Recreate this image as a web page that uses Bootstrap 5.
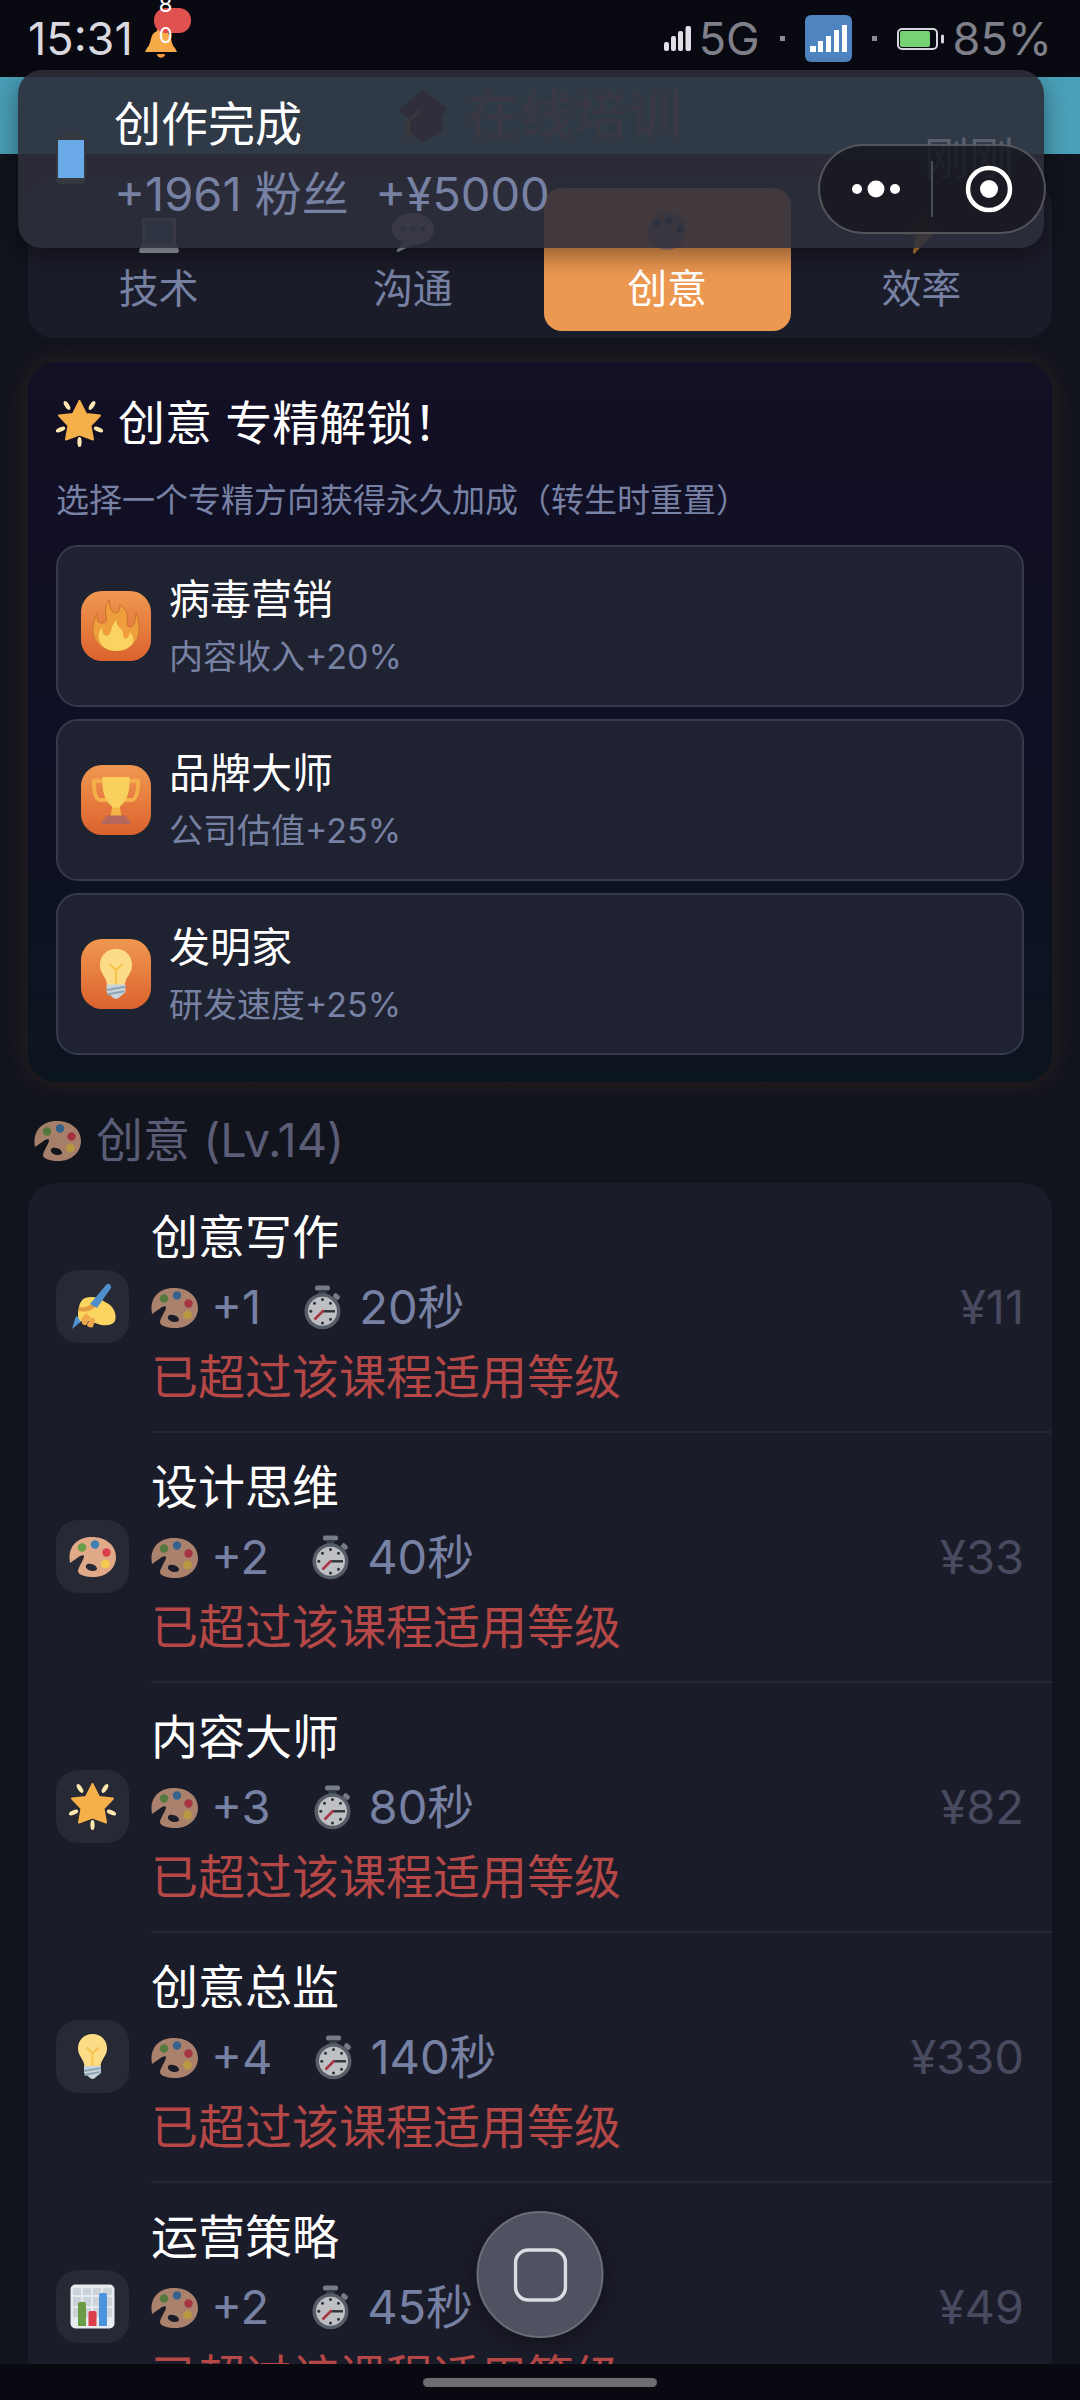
<!DOCTYPE html>
<html lang="zh-CN">
<head>
<meta charset="utf-8">
<meta name="viewport" content="width=device-width, initial-scale=1">
<title>在线培训</title>
<link href="https://cdn.jsdelivr.net/npm/bootstrap@5.3.0/dist/css/bootstrap.min.css" rel="stylesheet">
<style>
  :root { --panel: #1b1c29; --muted: #7781a3; --faint: #484a60; --icon: 47px; }
  body { background: #11131d; color: #fff; font-family: Inter, "Noto Sans CJK SC", sans-serif; font-size: 47px; line-height: 70px; }
  svg { display: block; flex: none; }
  button { font: inherit; color: inherit; }
  .ico { width: var(--icon); height: var(--icon); }
  .dim { opacity: .72; }
  .txt-muted { color: var(--muted); }

  .status-bar { height: 77px; background: #080911; padding: 0 28px; font-size: 45px; color: #7f808a; z-index: 1; }
  .clock { color: #d9d9e0; }
  .bell-wrap { margin: 8px 0 0 9px; }
  .bell-count { left: 12px; top: -19px; width: 37px; height: 25px; border-radius: 12px; background: #e0524f; padding-left: 5px; color: #fff; font-size: 22px; line-height: 31px; }
  .bell-count span { width: 14px; word-break: break-all; }
  .sep-dot { width: 5px; height: 5px; margin: 0 20px; background: #8a8b94; }

  .page-head { height: 77px; background: linear-gradient(90deg, #489db5, #4aa0b8); font-size: 54px; color: #b09a92; gap: 18px; }

  .notice { top: 70px; left: 18px; right: 36px; padding: 19px 30px 19px 29px; border-radius: 24px; background: rgba(46, 47, 59, .9); box-shadow: 0 8px 24px rgba(0, 0, 0, .4); z-index: 2; }
  .notice-text { margin-left: 18px; }
  .notice-time { color: #5a606e; font-size: 45px; }
  .capsule { top: 144px; right: 34px; width: 228px; height: 90px; border-radius: 45px; border: 2px solid rgba(255, 255, 255, .25); background: rgba(22, 24, 30, .85); z-index: 3; }
  .capsule button { flex: 1; height: 100%; background: none; border: 0; padding: 0; }
  .capsule-line { width: 2px; height: 56px; background: #4a4c54; }

  main { padding: 27px 28px 0; }
  .tabs-panel { background: var(--panel); border-radius: 26px; padding: 7px; gap: 7px; }
  .tab-btn { flex: 1; background: none; border: 0; border-radius: 18px; padding: 21px 0 12px; gap: 4px; font-size: 40px; line-height: 60px; color: var(--muted); }
  .tab-btn.active { background: #ed9850; color: #fff; }
  .tab-btn .ico { --icon: 46px; }

  .spec-panel { margin-top: 24px; padding: 28px 28px 27px; border-radius: 28px; background: linear-gradient(180deg, #130f25, #0e1024 60%, #0b151f); box-shadow: 0 0 26px 4px rgba(240, 150, 70, .09); }
  .spec-title { font-size: 47px; line-height: 66px; font-weight: 400; gap: 15px; margin: 0 0 19px; }
  .spec-sub { font-size: 33px; line-height: 50px; margin: 0 0 20px; }
  .spec-list { gap: 12px; }
  .spec-opt { height: 162px; border: 2px solid #373a4e; border-radius: 22px; background: #1f2230; padding: 0 23px; gap: 18px; }
  .opt-name { font-size: 41px; line-height: 62px; }
  .opt-desc { font-size: 34px; line-height: 54px; }
  .opt-ico { width: 70px; height: 70px; border-radius: 21px; background: linear-gradient(180deg, #ef9851, #dc622d); }
  .opt-ico .ico { --icon: 52px; }

  .section-head { margin: 23px 0 8px; padding-left: 6px; gap: 15px; font-size: 47px; line-height: 70px; font-weight: 400; color: #5b5d76; }
  .course-panel { background: var(--panel); border-radius: 28px 28px 0 0; }
  .course { padding-left: 28px; gap: 22px; }
  .course-ico { width: 73px; height: 73px; margin-bottom: 3px; border-radius: 22px; background: #272935; }
  .course-main { padding: 19px 28px 19px 0; border-bottom: 2px solid #252733; }
  .meta-row { gap: 38px; color: var(--muted); }
  .meta-item { gap: 13px; }
  .warn-text { color: #b54746; }
  .price { color: var(--faint); }

  .float-btn { bottom: 62px; width: 127px; height: 127px; border-radius: 50%; background: #4f5260; border: 2px solid #6a6c78; box-shadow: 0 4px 24px rgba(0, 0, 0, .4); z-index: 2; }
  .nav-strip { height: 36px; background: #080911; z-index: 1; }
  .nav-pill { width: 234px; height: 9px; border-radius: 5px; background: #6e6e72; }
</style>
<script src="https://cdn.jsdelivr.net/npm/bootstrap@5.3.0/dist/js/bootstrap.bundle.min.js"></script>
</head>
<body>
<svg width="0" height="0" class="position-absolute" aria-hidden="true">
  <defs>
    <symbol id="i-palette" viewBox="0 0 47 47">
      <path fill="#e0a988" fill-rule="evenodd" d="M1 30C-2 13 9 4 23 4c14 0 24 8.500 24 20S37 44 25 44c-8 0-16-2-16-6 0-3 6-12 6-14.500 0-2-2-1.500-4-.5zM17 32.500c-1 3 3 5.500 7 5.500s5-2 3-4.500-9-4-10-1z"/>
      <circle cx="13" cy="14.500" r="4.200" fill="#6a9e45"/><circle cx="26" cy="11.500" r="4.200" fill="#3f7fb5"/><circle cx="37.500" cy="19.500" r="4.200" fill="#dc3f4c"/><circle cx="36.500" cy="31" r="4.400" fill="#f5c94c"/>
    </symbol>
    <symbol id="i-timer" viewBox="0 0 47 47">
      <rect x="16" y="1.500" width="15" height="5" rx="2" fill="#98a2aa"/><rect x="19.500" y="6" width="8" height="5" fill="#414b52"/>
      <rect x="34" y="10" width="7" height="5" rx="2" transform="rotate(42 37.500 12.500)" fill="#98a2aa"/>
      <circle cx="23.500" cy="27.300" r="18" fill="#6d7880"/><circle cx="23.500" cy="27.300" r="14.500" fill="#fff"/>
      <g fill="#333b42"><circle cx="23.500" cy="15.500" r="1.500"/><circle cx="23.500" cy="39" r="1.500"/><circle cx="11.800" cy="27.300" r="1.500"/><circle cx="15.500" cy="19.300" r="1.500"/><circle cx="31.500" cy="19.300" r="1.500"/><circle cx="31.500" cy="35.300" r="1.500"/></g>
      <path d="M23.500 27.300H36" stroke="#333b42" stroke-width="2.400"/><path d="M24.500 26.300 15.500 35.500" stroke="#dc3f4c" stroke-width="2.600"/>
    </symbol>
    <symbol id="i-star" viewBox="0 0 47 47">
      <path fill="#f5b04a" stroke="#f5b04a" stroke-width="2" stroke-linejoin="round" d="m23.500 1 6.500 13 14 1.500-9.500 10L37 39.500l-13.500-5-13.500 5 2.500-14L3 15.500 17 14z"/>
      <g fill="#ffe7b0"><ellipse cx="11" cy="5.500" rx="2.200" ry="5" transform="rotate(-33 11 5.500)"/><ellipse cx="36" cy="5.500" rx="2.200" ry="5" transform="rotate(33 36 5.500)"/><ellipse cx="4.500" cy="29.500" rx="2.200" ry="5" transform="rotate(68 4.500 29.500)"/><ellipse cx="42.500" cy="29.500" rx="2.200" ry="5" transform="rotate(-68 42.500 29.500)"/><ellipse cx="23.500" cy="42" rx="2.100" ry="5"/></g>
    </symbol>
    <symbol id="i-bulb" viewBox="0 0 47 47">
      <path fill="#fddc87" d="M23.500 1C14.500 1 9 7.500 9 15.500c0 8 6 10 6.500 18h16C32 25.500 38 23.500 38 15.500 38 7.500 32.500 1 23.500 1z"/>
      <path fill="none" stroke="#f6c44e" stroke-width="2" d="M23.500 33V20l-6-5.500M23.500 20l6-5.500"/>
      <path fill="#c8d3dc" d="M15 33h17v7l-5 4c-2 2.500-5 2.500-7 0l-5-4z"/><path stroke="#8fa3b3" stroke-width="1.800" d="m15 38 17-3M15.500 42 31 39"/>
    </symbol>
    <symbol id="i-pen" viewBox="0 0 47 47">
      <path fill="#4d93d0" d="m3 46 4-13 7 4z"/>
      <path fill="#fcd560" d="M9 34C9 26 10 18 16 15c7-2 14-1 20 4 9 4 12 12 10 19-3 5-12 5-17 3l-9-3-9 0z"/>
      <path fill="#efa94b" d="m12 36 5-6 4 4-3 7c-1 2-5 1-5-1zM18 42l4-8 4 2-2 8c-2 1-6 0-6-2z"/>
      <path fill="#d98b36" d="M10 24c6 1 11-1 15-5l3 3c-5 6-12 8-18 6z" opacity=".75"/>
      <path fill="#4d8ecb" d="m21 21 16-19c2-3 6 0 5 3L28 25z"/>
    </symbol>
    <symbol id="i-chart" viewBox="0 0 47 47">
      <rect x="1.500" y="1.500" width="44" height="44" rx="5" fill="#e6ebef"/><path fill="#ccd4da" d="M4 5h8v7H4zm10 0h8v7h-8zm10 0h8v7h-8zm10 0h9v7h-9zM4 14h8v9H4zm10 0h8v9h-8zm10 0h8v9h-8zm10 0h9v9h-9zM4 25h8v9H4zm10 0h8v9h-8zm10 0h8v9h-8zm10 0h9v9h-9z"/>
      <path fill="#6a9c45" d="M9 43V21q0-2 2-2h4q2 0 2 2v22z"/><path fill="#dc3d4c" d="M19.500 43V30q0-2 2-2h4q2 0 2 2v13z"/><path fill="#4c93dd" d="M30 43V12q0-2 2-2h4q2 0 2 2v31z"/>
    </symbol>
    <symbol id="i-fire" viewBox="0 0 52 54">
      <path fill="#ee9e3d" stroke="#c9712c" d="M26 53C11 53 2 43 2 30c0-6 2-11 4-16 1 4-1 10 6 10s3-8 3-12c0-5 1-9 4-12 0 6 2 12 5 13 5 2 6-4 6-8 6 4 8 9 8 14 0 4-2 8 2 9 6 1 6-9 7-15 2 6 3 11 3 17 0 13-9 23-24 23z"/>
      <path fill="#fbd363" d="M26 53C15 53 8 46 8 37c0-4 2-7 4-9-1 5 1 9 4 9 7 0 3-11 11-16-1 5 2 7 5 10 3 4 0 8 4 9 3 0 4-3 4-7 2 2 4 5 4 8 0 7-8 12-18 12z"/>
    </symbol>
    <symbol id="i-trophy" viewBox="0 0 54 54">
      <path fill="none" stroke="#f6b04b" stroke-width="4" stroke-linejoin="round" d="M16 7H4c0 8 1 18 6 20h9M38 7h12c0 8-1 18-6 20h-9"/>
      <path fill="#f9d05d" d="M13 3h28c1 13-2 24-9 30-2 2-2 6 0 11H22c2-5 2-9 0-11C15 27 12 16 13 3z"/><path fill="#f4b546" d="M23 35h8l2 10H21z"/>
      <path fill="#b5665d" d="M17 43h20l5 7v2H12v-2z"/>
    </symbol>
    <symbol id="i-cap" viewBox="0 0 50 52"><path fill="#402838" d="M25 0 50 19 44 25v17L25 52 12 42V30L0 20z"/><path fill="none" stroke="#9c8a58" stroke-width="4" d="M22 21 10 31v18"/></symbol>
  </defs>
</svg>

<div class="vh-100 d-flex flex-column overflow-hidden position-relative">
  <div class="status-bar d-flex justify-content-between align-items-center flex-shrink-0">
    <div class="d-flex align-items-center">
      <span class="clock">15:31</span>
      <span class="bell-wrap position-relative">
        <svg width="38" height="32" viewBox="0 0 38 32" aria-hidden="true"><path fill="#f6ab48" d="M19 0c3 0 4 2 4 4 8 3 5 13 10 17l2 4H3l2-4C10 17 7 7 15 4c0-2 1-4 4-4z"/><path fill="#f39a3c" d="M15 27h8c0 5-8 5-8 0z"/></svg>
        <span class="bell-count position-absolute d-flex align-items-center"><span>80</span></span>
      </span>
    </div>
    <div class="d-flex align-items-center">
      <svg width="27" height="25" viewBox="0 0 27 25" fill="#e0e0e6" aria-hidden="true"><rect y="16" width="5" height="9" rx="2"/><rect x="7" y="10" width="5" height="15" rx="2"/><rect x="14" y="5" width="5" height="20" rx="2"/><rect x="21.500" width="5.500" height="25" rx="2"/></svg>
      <span class="ms-2">5G</span>
      <i class="sep-dot"></i>
      <svg width="47" height="47" viewBox="0 0 47 47" aria-hidden="true"><rect width="47" height="47" rx="6" fill="#4e84bf"/><path fill="#fff" d="M5 31h6v6H5zm8-5h5v11h-5zm8-5h5v16h-5zm8-6h5v22h-5zm8-5h5v27h-5z"/></svg>
      <i class="sep-dot"></i>
      <svg width="48" height="22" viewBox="0 0 48 22" aria-hidden="true"><rect x="1" y="1" width="39" height="20" rx="4" fill="none" stroke="#d5d6dc" stroke-width="2"/><rect x="3" y="3" width="30" height="16" rx="2" fill="#77d273"/><path stroke="#d5d6dc" stroke-width="3" stroke-linecap="round" d="M45.500 8v6"/></svg>
      <span class="ms-2">85%</span>
    </div>
  </div>

  <header class="page-head d-flex justify-content-center align-items-center flex-shrink-0">
    <svg width="50" height="52" aria-hidden="true"><use href="#i-cap"/></svg><span>在线培训</span>
  </header>

  <main class="flex-grow-1 overflow-hidden">
    <nav class="tabs-panel d-flex" aria-label="课程分类">
      <button type="button" class="tab-btn d-flex flex-column align-items-center">
        <svg class="ico dim" viewBox="0 0 46 46" aria-hidden="true"><path fill="#b9c2ca" d="M6 9h34v28H6z"/><path fill="#5286b5" d="M9 12h28v22H9z"/><path fill="#cfd4d9" d="m5 36-2 6q0 2 2 2h36q2 0 2-2l-2-6z"/></svg>技术</button>
      <button type="button" class="tab-btn d-flex flex-column align-items-center">
        <svg class="ico dim" viewBox="0 0 46 46" aria-hidden="true"><path fill="#c4cbd1" d="M23 4c12 0 21 7 21 16S35 36 23 36L8 43c-1 0-2-1-1-2l6-8C7 31 2 26 2 20 2 11 11 4 23 4z"/><g fill="#56616a"><circle cx="13" cy="20" r="2.500"/><circle cx="23" cy="20" r="2.500"/><circle cx="33" cy="20" r="2.500"/></g></svg>沟通</button>
      <button type="button" class="tab-btn active d-flex flex-column align-items-center" aria-current="true">
        <svg class="ico" viewBox="0 0 46 46" aria-hidden="true"><ellipse cx="23" cy="22" rx="19" ry="19" fill="#a07a6c"/><g fill="#1d4a7c"><circle cx="13" cy="14" r="3.500"/><circle cx="25" cy="12" r="3.500"/><circle cx="36" cy="20" r="3.500"/></g></svg>创意</button>
      <button type="button" class="tab-btn d-flex flex-column align-items-center">
        <svg class="ico dim" viewBox="0 0 46 46" aria-hidden="true"><path fill="#f7a53d" d="m26 2-22 24h14l-3 17c0 2 2 2 3 0l24-25H27L31 4z"/></svg>效率</button>
    </nav>

    <section class="spec-panel">
      <h2 class="spec-title d-flex align-items-center"><svg class="ico" aria-hidden="true"><use href="#i-star"/></svg>创意 专精解锁！</h2>
      <p class="spec-sub txt-muted">选择一个专精方向获得永久加成（转生时重置）</p>
      <div class="spec-list d-flex flex-column">
        <button type="button" class="spec-opt d-flex align-items-center text-start">
          <span class="opt-ico d-flex align-items-center justify-content-center"><svg class="ico" aria-hidden="true"><use href="#i-fire"/></svg></span>
          <span class="d-flex flex-column"><span class="opt-name">病毒营销</span><span class="opt-desc txt-muted">内容收入+20%</span></span>
        </button>
        <button type="button" class="spec-opt d-flex align-items-center text-start">
          <span class="opt-ico d-flex align-items-center justify-content-center"><svg class="ico" aria-hidden="true"><use href="#i-trophy"/></svg></span>
          <span class="d-flex flex-column"><span class="opt-name">品牌大师</span><span class="opt-desc txt-muted">公司估值+25%</span></span>
        </button>
        <button type="button" class="spec-opt d-flex align-items-center text-start">
          <span class="opt-ico d-flex align-items-center justify-content-center"><svg class="ico" aria-hidden="true"><use href="#i-bulb"/></svg></span>
          <span class="d-flex flex-column"><span class="opt-name">发明家</span><span class="opt-desc txt-muted">研发速度+25%</span></span>
        </button>
      </div>
    </section>

    <h2 class="section-head d-flex align-items-center"><svg class="ico dim" aria-hidden="true"><use href="#i-palette"/></svg>创意 (Lv.14)</h2>

    <ul class="course-panel list-unstyled mb-0">
      <li class="course d-flex align-items-center">
        <span class="course-ico d-flex align-items-center justify-content-center flex-shrink-0"><svg class="ico" aria-hidden="true"><use href="#i-pen"/></svg></span>
        <div class="course-main flex-grow-1 d-flex align-items-center justify-content-between">
          <div><div>创意写作</div>
            <div class="meta-row d-flex"><span class="meta-item d-flex align-items-center"><svg class="ico dim" aria-hidden="true"><use href="#i-palette"/></svg>+1</span><span class="meta-item d-flex align-items-center"><svg class="ico dim" aria-hidden="true"><use href="#i-timer"/></svg>20秒</span></div>
            <div class="warn-text">已超过该课程适用等级</div></div>
          <span class="price">¥11</span>
        </div>
      </li>
      <li class="course d-flex align-items-center">
        <span class="course-ico d-flex align-items-center justify-content-center flex-shrink-0"><svg class="ico" aria-hidden="true"><use href="#i-palette"/></svg></span>
        <div class="course-main flex-grow-1 d-flex align-items-center justify-content-between">
          <div><div>设计思维</div>
            <div class="meta-row d-flex"><span class="meta-item d-flex align-items-center"><svg class="ico dim" aria-hidden="true"><use href="#i-palette"/></svg>+2</span><span class="meta-item d-flex align-items-center"><svg class="ico dim" aria-hidden="true"><use href="#i-timer"/></svg>40秒</span></div>
            <div class="warn-text">已超过该课程适用等级</div></div>
          <span class="price">¥33</span>
        </div>
      </li>
      <li class="course d-flex align-items-center">
        <span class="course-ico d-flex align-items-center justify-content-center flex-shrink-0"><svg class="ico" aria-hidden="true"><use href="#i-star"/></svg></span>
        <div class="course-main flex-grow-1 d-flex align-items-center justify-content-between">
          <div><div>内容大师</div>
            <div class="meta-row d-flex"><span class="meta-item d-flex align-items-center"><svg class="ico dim" aria-hidden="true"><use href="#i-palette"/></svg>+3</span><span class="meta-item d-flex align-items-center"><svg class="ico dim" aria-hidden="true"><use href="#i-timer"/></svg>80秒</span></div>
            <div class="warn-text">已超过该课程适用等级</div></div>
          <span class="price">¥82</span>
        </div>
      </li>
      <li class="course d-flex align-items-center">
        <span class="course-ico d-flex align-items-center justify-content-center flex-shrink-0"><svg class="ico" aria-hidden="true"><use href="#i-bulb"/></svg></span>
        <div class="course-main flex-grow-1 d-flex align-items-center justify-content-between">
          <div><div>创意总监</div>
            <div class="meta-row d-flex"><span class="meta-item d-flex align-items-center"><svg class="ico dim" aria-hidden="true"><use href="#i-palette"/></svg>+4</span><span class="meta-item d-flex align-items-center"><svg class="ico dim" aria-hidden="true"><use href="#i-timer"/></svg>140秒</span></div>
            <div class="warn-text">已超过该课程适用等级</div></div>
          <span class="price">¥330</span>
        </div>
      </li>
      <li class="course d-flex align-items-center">
        <span class="course-ico d-flex align-items-center justify-content-center flex-shrink-0"><svg class="ico" aria-hidden="true"><use href="#i-chart"/></svg></span>
        <div class="course-main flex-grow-1 d-flex align-items-center justify-content-between">
          <div><div>运营策略</div>
            <div class="meta-row d-flex"><span class="meta-item d-flex align-items-center"><svg class="ico dim" aria-hidden="true"><use href="#i-palette"/></svg>+2</span><span class="meta-item d-flex align-items-center"><svg class="ico dim" aria-hidden="true"><use href="#i-timer"/></svg>45秒</span></div>
            <div class="warn-text">已超过该课程适用等级</div></div>
          <span class="price">¥49</span>
        </div>
      </li>
    </ul>
  </main>

  <div class="nav-strip d-flex align-items-center justify-content-center flex-shrink-0"><div class="nav-pill"></div></div>

  <div class="notice position-absolute d-flex align-items-center" role="status">
    <svg width="49" height="52" viewBox="0 0 49 52" aria-hidden="true"><rect x="9" y="1" width="30" height="50" rx="5" fill="#343a40"/><path fill="#6aaae9" d="M11 7h26v38H11z"/></svg>
    <div class="notice-text flex-grow-1"><div>创作完成</div><div class="txt-muted">+1961 粉丝&nbsp; +¥5000</div></div>
    <span class="notice-time">刚刚</span>
  </div>

  <div class="capsule position-absolute d-flex align-items-center">
    <button type="button" aria-label="更多"><svg class="mx-auto" width="50" height="18" viewBox="0 0 50 18" fill="#fff" aria-hidden="true"><circle cx="6" cy="9" r="5"/><circle cx="25" cy="9" r="8.500"/><circle cx="44" cy="9" r="5"/></svg></button>
    <span class="capsule-line"></span>
    <button type="button" aria-label="关闭"><svg class="mx-auto" width="48" height="48" viewBox="0 0 48 48" aria-hidden="true"><circle cx="24" cy="24" r="21" fill="none" stroke="#fff" stroke-width="4.500"/><circle cx="24" cy="24" r="9" fill="#fff"/></svg></button>
  </div>

  <button type="button" class="float-btn position-absolute start-50 translate-middle-x d-flex align-items-center justify-content-center p-0" aria-label="主页">
    <svg width="54" height="54" viewBox="0 0 54 54" aria-hidden="true"><rect x="2" y="2" width="50" height="50" rx="13" fill="none" stroke="#dcdde2" stroke-width="3.500"/></svg>
  </button>
</div>
</body>
</html>
